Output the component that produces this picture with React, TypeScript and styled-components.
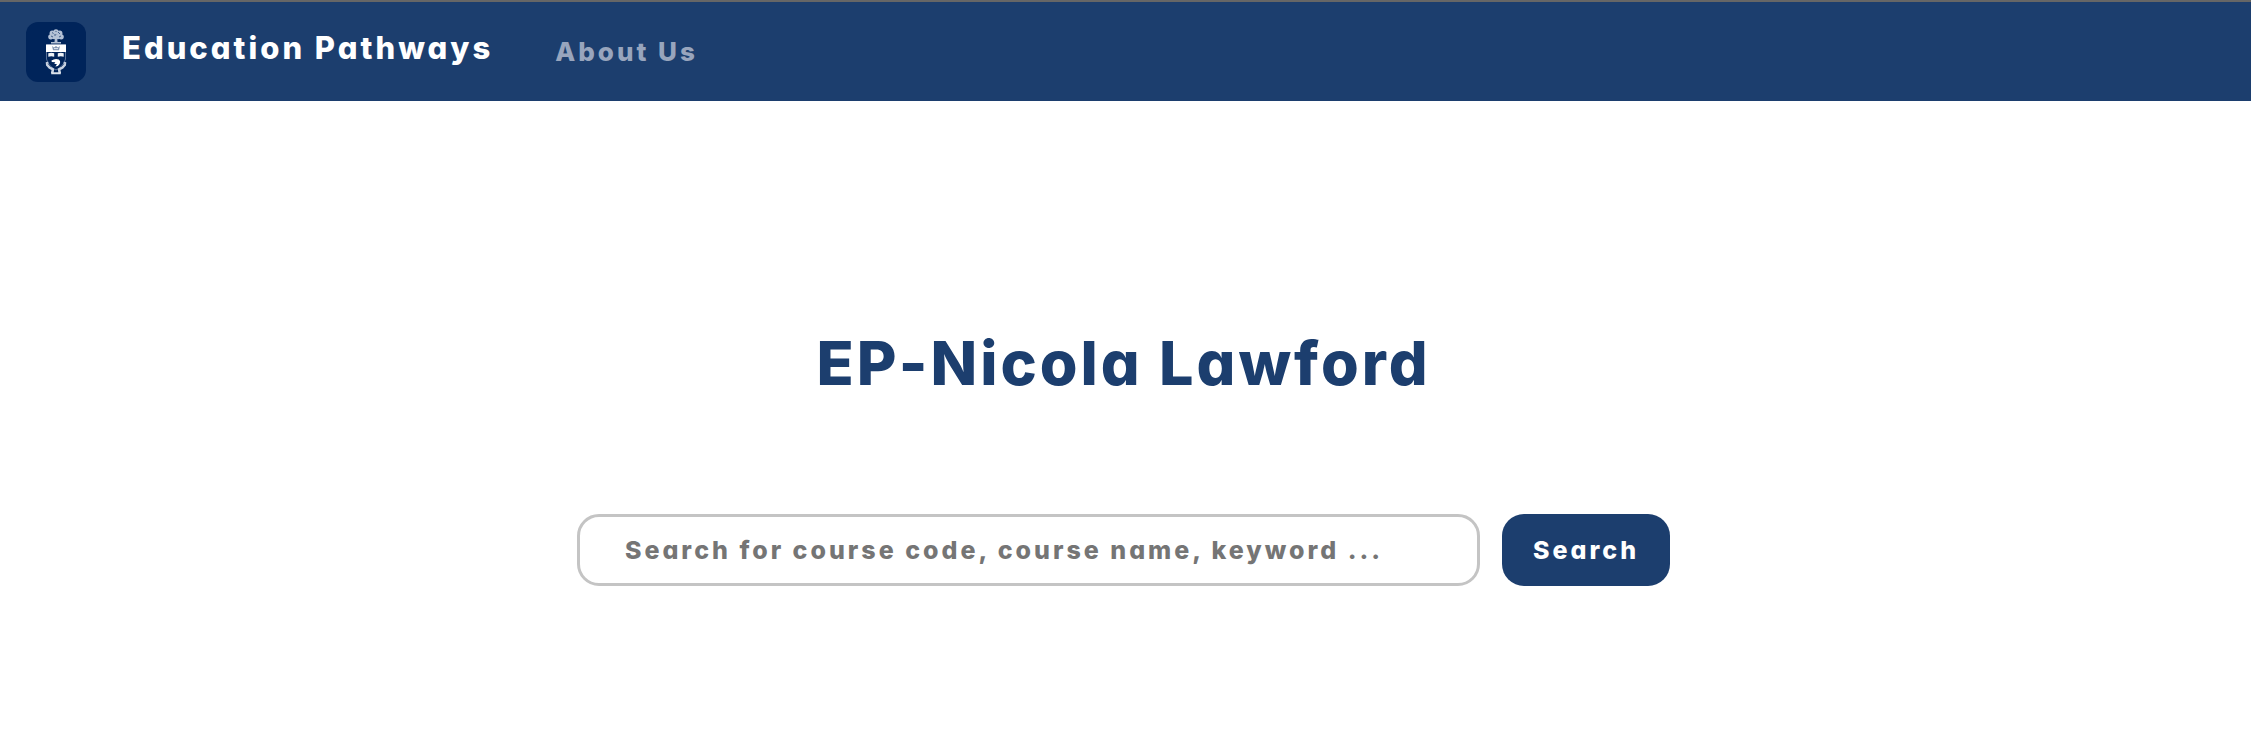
import React, { useState } from "react";
import styled, { createGlobalStyle } from "styled-components";

const navy = "#1c3e6e";

const GlobalStyle = createGlobalStyle`
  *, *::before, *::after { box-sizing: border-box; }
  body {
    margin: 0;
    background: #fff;
    color: ${navy};
    font-family: Inter, "Open Sans", sans-serif;
    font-feature-settings: "cv11" 1;
    font-weight: 800;
    letter-spacing: 3px;
  }
`;

const Navbar = styled.nav`
  display: flex;
  align-items: center;
  min-height: 101px;
  padding: 0 26px;
  border-top: 2px solid #666;
  background: ${navy};
`;

const Brand = styled.a`
  display: flex;
  align-items: center;
  gap: 36px;
  color: #fff;
  font-size: 31px;
  line-height: 40px;
  text-decoration: none;
`;

const BrandName = styled.span`
  padding-bottom: 8px;
`;

const Logo = styled.svg`
  width: 60px;
  height: 60px;
  border-radius: 12px;
  background: #00245a;
`;

const NavLink = styled.a`
  margin-left: 62px;
  color: #98a5bd;
  font-size: 26px;
  line-height: 32px;
  text-decoration: none;
`;

const Hero = styled.main`
  display: flex;
  flex-direction: column;
  align-items: center;
  gap: 111px;
  padding: 222px 26px 48px 22px;
`;

const Title = styled.h1`
  margin: 0;
  font-size: 61px;
  font-weight: 800;
  line-height: 80px;
`;

const SearchForm = styled.form`
  display: flex;
  justify-content: center;
  gap: 22px;
  width: 100%;
`;

const SearchInput = styled.input`
  width: 41%;
  height: 72px;
  padding: 0 45px;
  border: 3px solid #c4c4c4;
  border-radius: 22px;
  outline: none;
  background: #fff;
  color: ${navy};
  font: inherit;
  font-size: 25px;
  font-feature-settings: inherit;
  letter-spacing: inherit;

  &::placeholder { color: #757575; opacity: 1; }
  &:focus { border-color: ${navy}; }
`;

const SearchButton = styled.button`
  min-width: 168px;
  height: 72px;
  padding: 0 28px;
  border: 0;
  border-radius: 22px;
  background: ${navy};
  color: #fff;
  font: inherit;
  font-size: 25px;
  font-feature-settings: inherit;
  letter-spacing: inherit;
  cursor: pointer;
`;

function Crest() {
  return (
    <Logo viewBox="0 0 60 60" aria-hidden="true">
      <g fill="#b4c1d5">
        <circle cx="30" cy="10" r="2.7" />
        <circle cx="26.2" cy="11.2" r="2.6" />
        <circle cx="33.8" cy="11.2" r="2.6" />
        <circle cx="24.8" cy="14.8" r="2.6" />
        <circle cx="35.2" cy="14.8" r="2.6" />
        <circle cx="28.2" cy="14.6" r="2.6" />
        <circle cx="32" cy="14.6" r="2.6" />
        <path d="M29 15h2.2l.3 5h-3zM25 20h10v1.4H25z" />
      </g>
      <path
        d="M26 10.5l1.5 1M32 10l2 2M25 14l2 1M29 12v2M33 15l2-1M30 9v1"
        stroke="#274677"
        strokeWidth="0.8"
      />
      <path d="M20.5 23H39.5V37Q38 44 30 48Q22 44 20.5 37Z" fill="#00245a" stroke="#7188ab" strokeWidth="0.8" />
      <path d="M20 22.5h20v7.5H20z" fill="#fff" />
      <path d="M26 24l2 1.4L30 24l2 1.4L34 24l-1 4.2h-6z" fill="#8497b4" />
      <path d="M28 26.6h4" stroke="#fff" strokeWidth="0.8" />
      <path d="M22.3 31.3l3-.5 2.9.5v3.4l-2.9-.4-3 .4zM31.8 31.3l3-.5 2.9.5v3.4l-2.9-.4-3 .4z" fill="#eef2f6" />
      <path d="M25.5 38.5Q29 36 32.8 37.4Q35 39.2 33.6 42Q32.2 44.6 29.4 44.5L31 42.3L28.2 41.7L29.4 40.2L25.8 40Z" fill="#fff" />
      <g fill="none" stroke="#c8d2e0" strokeWidth="2.6" strokeLinejoin="round">
        <path d="M21 40l.3 3 2.4 2.7 3.2 1.6-.7 4" />
        <path d="M39 40l-.3 3-2.4 2.7-3.2 1.6.7 4" />
      </g>
      <path d="M22 41.5l3 3.4M38 41.5l-3 3.4" stroke="#314f7d" strokeWidth="0.7" />
      <path d="M25.2 50.3h9.6v2h-9.6z" fill="#dce3ec" />
    </Logo>
  );
}

export default function App() {
  const [query, setQuery] = useState("");

  return (
    <>
      <GlobalStyle />
      <Navbar>
        <Brand href="#home">
          <Crest />
          <BrandName>Education Pathways</BrandName>
        </Brand>
        <NavLink href="#about">About Us</NavLink>
      </Navbar>
      <Hero>
        <Title>EP-Nicola Lawford</Title>
        <SearchForm role="search" onSubmit={(event) => event.preventDefault()}>
          <SearchInput
            type="text"
            aria-label="Search courses"
            placeholder="Search for course code, course name, keyword ..."
            value={query}
            onChange={(event) => setQuery(event.target.value)}
          />
          <SearchButton type="submit">Search</SearchButton>
        </SearchForm>
      </Hero>
    </>
  );
}
